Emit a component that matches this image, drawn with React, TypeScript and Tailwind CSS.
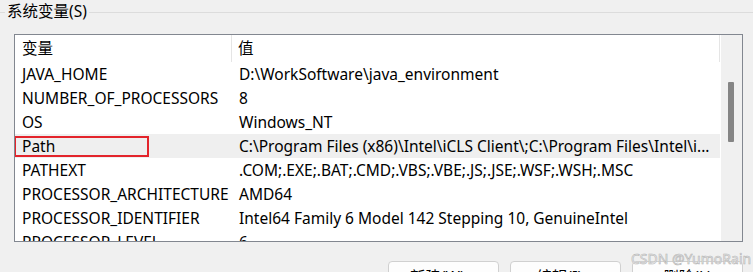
import React from 'react'

const rows: { name: string; value: string }[] = [
  { name: 'JAVA_HOME', value: 'D:\\WorkSoftware\\java_environment' },
  { name: 'NUMBER_OF_PROCESSORS', value: '8' },
  { name: 'OS', value: 'Windows_NT' },
  { name: 'Path', value: 'C:\\Program Files (x86)\\Intel\\iCLS Client\\;C:\\Program Files\\Intel\\i...' },
  { name: 'PATHEXT', value: '.COM;.EXE;.BAT;.CMD;.VBS;.VBE;.JS;.JSE;.WSF;.WSH;.MSC' },
  { name: 'PROCESSOR_ARCHITECTURE', value: 'AMD64' },
  { name: 'PROCESSOR_IDENTIFIER', value: 'Intel64 Family 6 Model 142 Stepping 10, GenuineIntel' },
  { name: 'PROCESSOR_LEVEL', value: '6' },
]

const font = "font-['Noto_Sans','Noto_Sans_CJK_SC',sans-serif]"

export default function App() {
  return (
    <div className={`relative h-[272px] w-[753px] overflow-hidden bg-[#f0f0f0] text-[15.5px] text-black ${font}`}>
      {/* group title */}
      <div className="flex h-[24px] items-center">
        <div className="mt-[1px] w-[5px] border-t border-[#dcdcdc]" />
        <span className="px-[2px] leading-none">系统变量(S)</span>
        <div className="mt-[1px] flex-1 border-t border-[#dcdcdc]" />
      </div>

      {/* list view */}
      <div className="ml-[14px] mt-[10px] flex h-[208px] w-[729px] border border-[#828790] bg-white">
        <div className="flex w-[706px] flex-col overflow-hidden">
          <div className="flex h-[27px] shrink-0 items-center">
            <div className="flex h-full w-[217px] items-center border-r border-[#e5e5e5] pl-[7px]">变量</div>
            <div className="flex h-full flex-1 items-center border-r border-[#e5e5e5] pl-[6px]">值</div>
          </div>
          {rows.map(row => (
            <div
              key={row.name}
              className={`relative flex h-[24px] shrink-0 items-center whitespace-nowrap pt-[1px] ${row.name === 'Path' ? 'bg-[#efefef]' : ''}`}
            >
              <div className="w-[217px] shrink-0 pl-[7px]">{row.name}</div>
              <div className="pl-[7px]">{row.value}</div>
              {row.name === 'Path' && (
                <div className="absolute left-[-1px] top-[2px] h-[21px] w-[135px] border-2 border-[#e3242b]" />
              )}
            </div>
          ))}
        </div>
        {/* scrollbar */}
        <div className="ml-[1px] w-[21px] bg-[#f0f0f0] pt-[47px] pl-[7px]">
          <div className="h-[60px] w-[6px] rounded-[1px] bg-[#858585]" />
        </div>
      </div>

      {/* buttons */}
      <div className="ml-[388px] mt-[19px] flex gap-[11px]">
        {['新建(W)...', '编辑(I)...', '删除(L)'].map(label => (
          <div
            key={label}
            className="flex h-[30px] w-[111px] items-center justify-center rounded-[4px] border border-[#d0d0d0] bg-[#fdfdfd] pt-[4px]"
          >
            {label}
          </div>
        ))}
      </div>

      {/* watermark */}
      <div className="absolute left-[631px] top-[248px] whitespace-nowrap text-[14px] text-[#f4f4f4] [-webkit-text-stroke:0.6px_#b4b4b4]">
        CSDN @YumoRain
      </div>
    </div>
  )
}
